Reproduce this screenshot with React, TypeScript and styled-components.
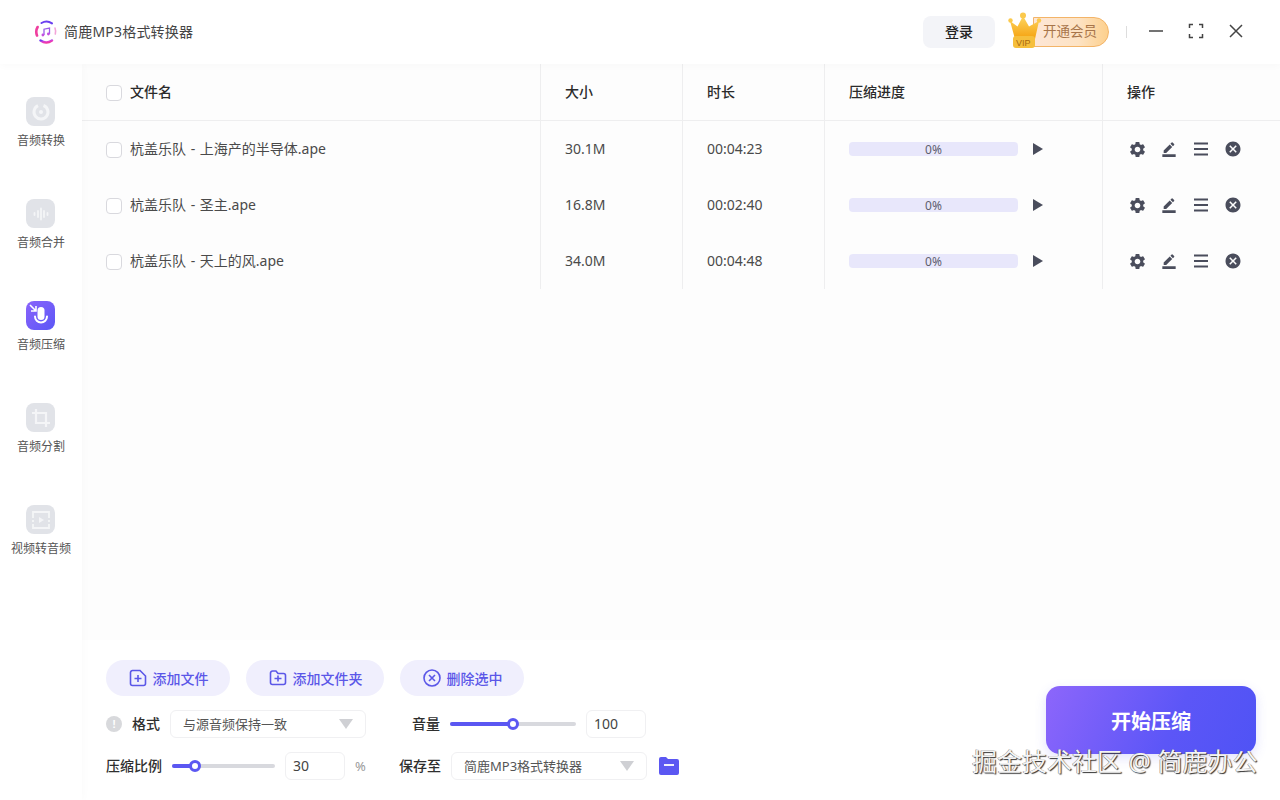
import React from "react";
import styled, { createGlobalStyle } from "styled-components";
import { MdSettings, MdBorderColor, MdCancel } from "react-icons/md";

const GlobalStyle = createGlobalStyle`
	html, body {
		margin: 0;
		padding: 0;
		background: #fff;
		font-family: "Noto Sans", "Noto Sans CJK SC", sans-serif;
		color: #333;
	}
	* {
		box-sizing: border-box;
	}
`;

const Page = styled.div`
	position: relative;
	width: 1280px;
	height: 800px;
	overflow: hidden;
	display: flex;
	flex-direction: column;
	background: #fff;
`;

const Header = styled.header`
	position: relative;
	z-index: 2;
	height: 64px;
	flex: none;
	display: flex;
	align-items: center;
	padding: 0 34px;
	background: #fff;
	box-shadow: 0 2px 8px rgba(0, 0, 0, 0.025);
`;

const Brand = styled.div`
	display: flex;
	align-items: center;
	gap: 6px;
	font-size: 14px;
	color: #444;
	flex: 1;
`;

const BrandName = styled.span`
	margin-bottom: 2px;
	letter-spacing: 0.2px;
`;

const LoginButton = styled.button`
	width: 72px;
	height: 32px;
	border: none;
	border-radius: 8px;
	background: #f3f4f8;
	color: #222;
	font: 500 14px "Noto Sans CJK SC", sans-serif;
	margin-right: 13px;
	padding: 0 0 2px;
`;

const VipWrap = styled.div`
	position: relative;
	width: 101px;
	height: 32px;
	display: flex;
	justify-content: flex-end;
	align-items: center;
`;

const VipPill = styled.div`
	width: 76px;
	height: 30px;
	padding-left: 9px;
	border: 1px solid #f3b468;
	border-radius: 0 15px 15px 0;
	background: linear-gradient(90deg, #fde6d6 0%, #fde3c4 60%, #fdd08d 100%);
	color: #a8754a;
	font-size: 13.5px;
	line-height: 26px;
	white-space: nowrap;
`;

const Crown = styled.svg`
	position: absolute;
	left: 0;
	top: -4px;
`;

const HeaderDivider = styled.div`
	width: 1px;
	height: 12px;
	background: #ddd;
	margin: 0 21px 0 17px;
`;

const WindowControls = styled.div`
	display: flex;
	align-items: center;
	gap: 24px;
	margin-right: 2px;
	height: 16px;
	padding-bottom: 3px;
	box-sizing: content-box;
`;

const Body = styled.div`
	flex: 1;
	display: flex;
	min-height: 0;
`;

const Sidebar = styled.nav`
	width: 82px;
	flex: none;
	display: flex;
	flex-direction: column;
	align-items: center;
	gap: 38px;
	padding-top: 33px;
	background: #fff;
	box-shadow: 2px 0 8px rgba(0, 0, 0, 0.02);
	position: relative;
	z-index: 1;
`;

const NavItem = styled.div`
	height: 64px;
	display: flex;
	flex-direction: column;
	align-items: center;
	gap: 6px;
	font-size: 12px;
	line-height: 18px;
	color: #555;
	white-space: nowrap;
`;

const NavIcon = styled.div<{ $active?: boolean }>`
	width: 29px;
	height: 29px;
	border-radius: 8px;
	display: flex;
	align-items: center;
	justify-content: center;
	background: ${(p) =>
		p.$active ? "linear-gradient(135deg, #8a63fb, #5b57f6)" : "#e1e3e8"};
`;

const Main = styled.main`
	flex: 1;
	display: flex;
	flex-direction: column;
	min-width: 0;
`;

const ListArea = styled.section`
	height: 576px;
	flex: none;
	background: #fdfdfd;
`;

const TableRow = styled.div<{ $head?: boolean }>`
	display: grid;
	grid-template-columns: 459px 142px 142px 278px 177px;
	height: ${(p) => (p.$head ? "57px" : "56px")};
	border-bottom: ${(p) => (p.$head ? "1px solid #eeeeef" : "none")};
`;

const Cell = styled.div<{ $head?: boolean; $last?: boolean }>`
	display: flex;
	align-items: center;
	padding-left: 24px;
	border-right: ${(p) => (p.$last ? "none" : "1px solid #eeeeef")};
	font-size: 14px;
	font-weight: ${(p) => (p.$head ? 500 : 400)};
	color: ${(p) => (p.$head ? "#2b2b2b" : "#4a4a4a")};
	white-space: nowrap;
`;

const CellText = styled.span`
	margin-bottom: 2px;
	word-spacing: 1px;
`;

const Checkbox = styled.span`
	width: 16px;
	height: 16px;
	flex: none;
	margin: 1px 8px 0 0;
	border: 1px solid #d9d9de;
	border-radius: 4px;
	background: #fff;
`;

const Progress = styled.div`
	width: 169px;
	height: 14px;
	border-radius: 4px;
	background: #e8e7fb;
	color: #5e5e6e;
	font-size: 12px;
	line-height: 16px;
	text-align: center;
`;

const PlayIcon = styled.svg`
	margin-left: 15px;
`;

const Actions = styled.div`
	display: flex;
	align-items: center;
	gap: 12px;
	color: #4a4d5c;
`;

const ActionSlot = styled.span`
	width: 20px;
	height: 20px;
	display: flex;
	align-items: center;
	justify-content: center;
`;

const Panel = styled.section`
	flex: 1;
	position: relative;
	padding: 20px 24px 0;
	background: #fff;
`;

const ButtonRow = styled.div`
	display: flex;
	gap: 16px;
	margin-bottom: 14px;
`;

const PillButton = styled.button<{ $width: number }>`
	width: ${(p) => p.$width}px;
	height: 36px;
	border: none;
	border-radius: 18px;
	background: #f0effd;
	color: #5b57e8;
	font: 500 14px "Noto Sans CJK SC", sans-serif;
	display: flex;
	align-items: center;
	justify-content: center;
	gap: 5px;
	padding: 0 0 1px;
`;

const Controls = styled.div`
	display: grid;
	grid-template-columns: 261px 290px;
	column-gap: 32px;
	row-gap: 14px;
`;

const Field = styled.div`
	height: 28px;
	display: flex;
	align-items: center;
	gap: 10px;
`;

const Label = styled.label<{ $width?: number }>`
	width: ${(p) => (p.$width ? `${p.$width}px` : "auto")};
	flex: none;
	margin-bottom: 2px;
	text-align: right;
	font-size: 14px;
	font-weight: 500;
	color: #2f2f2f;
	white-space: nowrap;
`;

const InfoDot = styled.span`
	width: 16px;
	height: 16px;
	border-radius: 50%;
	background: #d8d9dc;
	color: #fff;
	font: 700 11px/16px "Liberation Sans", sans-serif;
	text-align: center;
	flex: none;
`;

const Select = styled.div<{ $width: number }>`
	width: ${(p) => p.$width}px;
	height: 28px;
	flex: none;
	display: flex;
	align-items: center;
	justify-content: space-between;
	padding: 0 12px 2px;
	border: 1px solid #f0f0f2;
	border-radius: 6px;
	background: #fff;
	font-size: 13px;
	color: #555;
	white-space: nowrap;
`;

const Caret = styled.span`
	width: 0;
	height: 0;
	margin-top: 2px;
	border-left: 7px solid transparent;
	border-right: 7px solid transparent;
	border-top: 10px solid #cfd0d4;
`;

const Slider = styled.div<{ $width: number }>`
	position: relative;
	width: ${(p) => p.$width}px;
	height: 4px;
	flex: none;
	border-radius: 2px;
	background: #d8d9de;
`;

const SliderFill = styled.div`
	height: 100%;
	border-radius: 2px;
	background: #5b57f2;
`;

const SliderThumb = styled.div`
	position: absolute;
	top: 50%;
	width: 12px;
	height: 12px;
	margin: -6px 0 0 -6px;
	border: 3px solid #5b57f2;
	border-radius: 50%;
	background: #fff;
`;

const NumberBox = styled.div`
	width: 60px;
	height: 28px;
	flex: none;
	padding-left: 7px;
	border: 1px solid #f0f0f2;
	border-radius: 6px;
	font-size: 14px;
	line-height: 26px;
	color: #444;
`;

const Unit = styled.span`
	font-size: 13px;
	color: #999;
`;

const StartButton = styled.button`
	position: absolute;
	left: 964px;
	top: 46px;
	width: 210px;
	height: 68px;
	border: none;
	border-radius: 14px;
	background: linear-gradient(115deg, #8d66fb 0%, #5c56f7 60%, #4f53f5 100%);
	box-shadow: 0 4px 12px rgba(91, 87, 246, 0.18);
	color: #fff;
	font: 700 20px "Noto Sans CJK SC", sans-serif;
`;

const Watermark = styled.div`
	position: absolute;
	left: 972px;
	top: 745px;
	z-index: 3;
	font-size: 25px;
	line-height: 32px;
	color: #f4f4f4;
	text-shadow: 1px 1px 1px #333, -0.5px -0.5px 0.5px #777;
	white-space: nowrap;
`;

function Logo() {
	return (
		<svg width="24" height="24" viewBox="0 0 24 24" fill="none">
			<defs>
				<linearGradient id="logoRing" x1="0" y1="0" x2="1" y2="1">
					<stop offset="0" stopColor="#6a3ff0" />
					<stop offset="0.5" stopColor="#e23fd0" />
					<stop offset="1" stopColor="#f0389a" />
				</linearGradient>
			</defs>
			<path d="M3 15.5A9.8 9.8 0 0 1 3.6 7" stroke="#ef3f9f" strokeWidth="2.6" strokeLinecap="round" />
			<path d="M7.5 3A10 10 0 0 1 18 3.4" stroke="#6a3ff0" strokeWidth="2" strokeLinecap="round" />
			<path d="M21 8A10 10 0 0 1 21.3 14" stroke="#f3a5d8" strokeWidth="1.6" strokeLinecap="round" />
			<path d="M6.5 20.5A10 10 0 0 0 18 20.5" stroke="url(#logoRing)" strokeWidth="2.4" strokeLinecap="round" />
			<path d="M10 15V9.2L15.5 8V14" stroke="#9a5be8" strokeWidth="1.3" />
			<circle cx="8.9" cy="15" r="1.4" fill="#c44fe0" />
			<circle cx="14.4" cy="14" r="1.4" fill="#c44fe0" />
		</svg>
	);
}

function CrownBadge() {
	return (
		<Crown width="34" height="38" viewBox="0 0 34 38" fill="none">
			<defs>
				<linearGradient id="crownGold" x1="0" y1="0" x2="0" y2="1">
					<stop offset="0" stopColor="#fdd660" />
					<stop offset="1" stopColor="#f5a10f" />
				</linearGradient>
			</defs>
			<path d="M2 9L9.5 14.5L15 4L21 14.5L31 9L27 27H7Z" fill="url(#crownGold)" />
			<circle cx="2.5" cy="8.5" r="2.2" fill="#fbc94c" />
			<circle cx="15" cy="3.5" r="3" fill="#fbc94c" />
			<circle cx="31" cy="8.5" r="2.2" fill="#fbc94c" />
			<rect x="5" y="24" width="22" height="12" rx="3" fill="#f6bf3c" />
			<text x="8" y="33.5" fontSize="9" fontFamily="Liberation Sans" fill="#a86a10">VIP</text>
		</Crown>
	);
}

function WinIcon({ d }: { d: string }) {
	return (
		<svg width="16" height="16" viewBox="0 0 16 16" fill="none">
			<path d={d} stroke="#444" strokeWidth="1.5" />
		</svg>
	);
}

const navIcons = {
	convert: (
		<svg width="20" height="20" viewBox="0 0 20 20" fill="none">
			<path d="M12.5 3.5A7 7 0 1 1 7 3.7" stroke="#f4f5f7" strokeWidth="3" />
			<circle cx="10" cy="10" r="2" fill="#f4f5f7" />
		</svg>
	),
	merge: (
		<svg width="20" height="20" viewBox="0 0 20 20" stroke="#f4f5f7" strokeWidth="1.8" strokeLinecap="round">
			<path d="M3.5 9v2M7 7v6M10 4.5v11M13 7v6M16.5 9v2" />
		</svg>
	),
	compress: (
		<svg width="29" height="29" viewBox="0 0 29 29" fill="none">
			<rect x="11.5" y="6" width="7" height="13" rx="3.5" fill="#fff" />
			<path d="M9 15.5a6 6 0 0 0 12 0" stroke="#fff" strokeWidth="2" strokeLinecap="round" />
			<path d="M4 4L9.5 9.5M10 5v5H5" stroke="#fff" strokeWidth="1.6" />
		</svg>
	),
	split: (
		<svg width="22" height="22" viewBox="0 0 22 22" fill="none" stroke="#f4f5f7" strokeWidth="2.2">
			<path d="M6 2v14h14" />
			<path d="M2 6h14v14" />
		</svg>
	),
	video: (
		<svg width="22" height="22" viewBox="0 0 22 22" fill="none" stroke="#f4f5f7" strokeWidth="1.8">
			<path d="M3 7V3h16v4M3 15v4h16v-4" />
			<path d="M3 7v8M19 7v8" strokeDasharray="2 2" />
			<path d="M9 8l5 3-5 3z" fill="#f4f5f7" stroke="none" />
		</svg>
	),
};

const nav = [
	{ label: "音频转换", icon: navIcons.convert },
	{ label: "音频合并", icon: navIcons.merge },
	{ label: "音频压缩", icon: navIcons.compress, active: true },
	{ label: "音频分割", icon: navIcons.split },
	{ label: "视频转音频", icon: navIcons.video },
];

const files = [
	{ name: "杭盖乐队 - 上海产的半导体.ape", size: "30.1M", time: "00:04:23" },
	{ name: "杭盖乐队 - 圣主.ape", size: "16.8M", time: "00:02:40" },
	{ name: "杭盖乐队 - 天上的风.ape", size: "34.0M", time: "00:04:48" },
];

function FileRow({ name, size, time }: { name: string; size: string; time: string }) {
	return (
		<TableRow>
			<Cell>
				<Checkbox />
				<CellText>{name}</CellText>
			</Cell>
			<Cell>
				<CellText>{size}</CellText>
			</Cell>
			<Cell>
				<CellText>{time}</CellText>
			</Cell>
			<Cell>
				<Progress>0%</Progress>
				<PlayIcon width="10" height="12" viewBox="0 0 10 12">
					<path d="M0 0L10 6L0 12Z" fill="#4a4d5c" />
				</PlayIcon>
			</Cell>
			<Cell $last>
				<Actions>
					<ActionSlot>
						<MdSettings size={19} />
					</ActionSlot>
					<ActionSlot>
						<MdBorderColor size={16} />
					</ActionSlot>
					<ActionSlot>
						<svg width="20" height="20" viewBox="0 0 20 20" stroke="#4a4d5c" strokeWidth="2">
							<path d="M3 4.5h14M3 10h14M3 15.5h14" />
						</svg>
					</ActionSlot>
					<ActionSlot>
						<MdCancel size={18} />
					</ActionSlot>
				</Actions>
			</Cell>
		</TableRow>
	);
}

export default function App() {
	return (
		<Page>
			<GlobalStyle />
			<Header>
				<Brand>
					<Logo />
					<BrandName>简鹿MP3格式转换器</BrandName>
				</Brand>
				<LoginButton>登录</LoginButton>
				<VipWrap>
					<CrownBadge />
					<VipPill>开通会员</VipPill>
				</VipWrap>
				<HeaderDivider />
				<WindowControls>
					<WinIcon d="M1 8H15" />
					<WinIcon d="M1.5 5V1.5H5M11 1.5H14.5V5M14.5 11V14.5H11M5 14.5H1.5V11" />
					<WinIcon d="M2 2L14 14M14 2L2 14" />
				</WindowControls>
			</Header>
			<Body>
				<Sidebar>
					{nav.map((item) => (
						<NavItem key={item.label}>
							<NavIcon $active={item.active}>{item.icon}</NavIcon>
							{item.label}
						</NavItem>
					))}
				</Sidebar>
				<Main>
					<ListArea>
						<TableRow $head>
							<Cell $head>
								<Checkbox />
								<CellText>文件名</CellText>
							</Cell>
							<Cell $head>
								<CellText>大小</CellText>
							</Cell>
							<Cell $head>
								<CellText>时长</CellText>
							</Cell>
							<Cell $head>
								<CellText>压缩进度</CellText>
							</Cell>
							<Cell $head $last>
								<CellText>操作</CellText>
							</Cell>
						</TableRow>
						{files.map((f) => (
							<FileRow key={f.name} {...f} />
						))}
					</ListArea>
					<Panel>
						<ButtonRow>
							<PillButton $width={124}>
								<svg width="20" height="20" viewBox="0 0 20 20" fill="none" stroke="#5b57e8" strokeWidth="1.6">
									<path d="M2.5 4.5a2 2 0 0 1 2-2h7.5l5.5 5.5v7.5a2 2 0 0 1-2 2h-11a2 2 0 0 1-2-2zM6.5 10.5h7M10 7v7" />
								</svg>
								添加文件
							</PillButton>
							<PillButton $width={138}>
								<svg width="20" height="20" viewBox="0 0 20 20" fill="none" stroke="#5b57e8" strokeWidth="1.6">
									<path d="M2.5 5a2 2 0 0 1 2-2h3.5l2 2.5h5.5a2 2 0 0 1 2 2v7a2 2 0 0 1-2 2h-11a2 2 0 0 1-2-2zM6.5 10.5h7M10 7.5v6" />
								</svg>
								添加文件夹
							</PillButton>
							<PillButton $width={124}>
								<svg width="20" height="20" viewBox="0 0 20 20" fill="none" stroke="#5b57e8" strokeWidth="1.6">
									<circle cx="10" cy="10" r="8" />
									<path d="M7 7l6 6M13 7l-6 6" />
								</svg>
								删除选中
							</PillButton>
						</ButtonRow>
						<Controls>
							<Field>
								<InfoDot>!</InfoDot>
								<Label>格式</Label>
								<Select $width={196}>
									与源音频保持一致
									<Caret />
								</Select>
							</Field>
							<Field>
								<Label $width={41}>音量</Label>
								<Slider $width={126}>
									<SliderFill style={{ width: "50%" }} />
									<SliderThumb style={{ left: "50%" }} />
								</Slider>
								<NumberBox>100</NumberBox>
							</Field>
							<Field>
								<Label>压缩比例</Label>
								<Slider $width={103}>
									<SliderFill style={{ width: "22%" }} />
									<SliderThumb style={{ left: "22%" }} />
								</Slider>
								<NumberBox>30</NumberBox>
								<Unit>%</Unit>
							</Field>
							<Field>
								<Label $width={42}>保存至</Label>
								<Select $width={196}>
									简鹿MP3格式转换器
									<Caret />
								</Select>
								<svg width="22" height="20" viewBox="0 0 22 20" style={{ marginLeft: 1 }}>
									<path d="M1 3a2 2 0 0 1 2-2h5l2 2h9a2 2 0 0 1 2 2v12a2 2 0 0 1-2 2H3a2 2 0 0 1-2-2z" fill="#5b57f2" />
									<path d="M6 9h10" stroke="#fff" strokeWidth="1.8" />
								</svg>
							</Field>
						</Controls>
						<StartButton>开始压缩</StartButton>
					</Panel>
				</Main>
			</Body>
			<Watermark>掘金技术社区 @ 简鹿办公</Watermark>
		</Page>
	);
}
